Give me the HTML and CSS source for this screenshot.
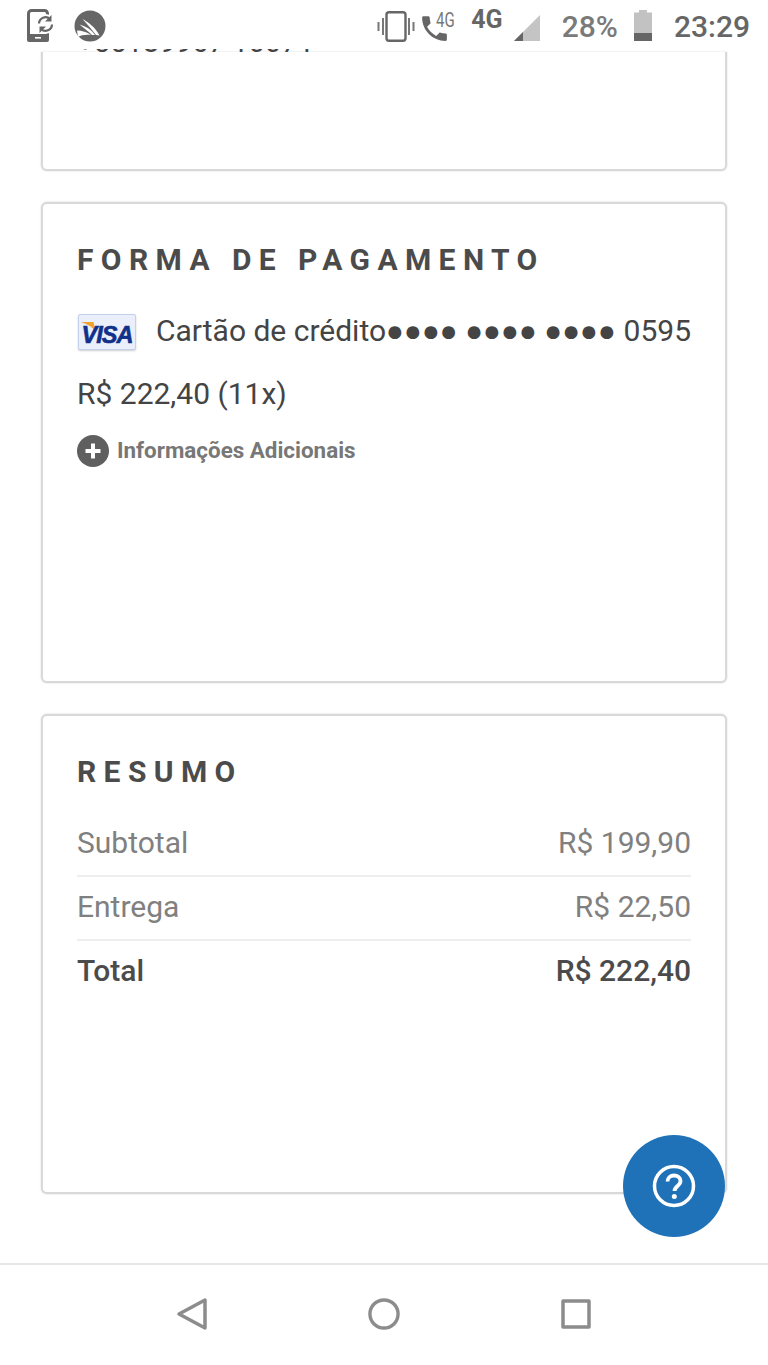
FILE: index.html
```html
<!DOCTYPE html>
<html lang="pt-BR">
<head>
<meta charset="utf-8">
<title>Resumo do pedido</title>
<link rel="stylesheet" href="styles.css">
</head>
<body>
<div class="screen">
  <header class="status">
    <div class="status-left">
      <svg class="ic-sync" viewBox="0 0 27 33"><rect x="1.500" y="1.500" width="19" height="30" rx="3" fill="none" stroke="#666" stroke-width="3"/><rect x="0" y="25" width="22" height="8" rx="2" fill="#666"/><rect x="8" y="28" width="6" height="1.600" fill="#fff"/><circle cx="18.500" cy="15" r="10" fill="#fff"/><path d="M12 14.500a6.500 6.500 0 0 1 11-4.500M25 15.500a6.500 6.500 0 0 1-11 4.500" fill="none" stroke="#666" stroke-width="2.200"/><path d="M24.500 6v6.500h-6.500zM12.500 24v-6.500h6.500z" fill="#666"/></svg>
      <svg class="ic-app" viewBox="0 0 32 32"><circle cx="16" cy="16" r="15.500" fill="#666"/><path d="M8.500 9C14 12 21 17 25.500 25.500L22 25C19 21 14 15 8.500 9ZM5.500 14.500C11 16 17 19 21 25L18 25C15 22 10 18 5.500 14.500ZM3 20.500C8 20.500 13 22 17 25C12 24.500 7 25 4 27Z" fill="#fff"/></svg>
    </div>
    <div class="status-right">
      <svg class="ic-vib" viewBox="0 0 38 31"><rect x="9.500" y="1.200" width="19" height="28.600" rx="2.500" fill="none" stroke="#666" stroke-width="2.400"/><path d="M1.500 11v9M6 7v17M32 7v17M36.500 11v9" stroke="#777" stroke-width="2" fill="none"/></svg>
      <div class="call">
        <svg class="ic-phone" viewBox="0 0 24 24"><path d="M6.600 10.800c1.400 2.800 3.800 5.100 6.600 6.600l2.200-2.200c.3-.3.700-.4 1-.2 1.100.4 2.300.6 3.600.6.600 0 1 .4 1 1V20c0 .6-.4 1-1 1C10.600 21 3 13.400 3 4c0-.6.400-1 1-1h3.500c.6 0 1 .4 1 1 0 1.300.2 2.500.6 3.600.1.300 0 .7-.2 1z" fill="#666"/></svg>
        <span class="call-4g">4G</span>
      </div>
      <span class="net">4G</span>
      <svg class="ic-signal" viewBox="0 0 26 26"><path d="M26 0V26H0Z" fill="#c4c4c4"/><path d="M9 17V26H0Z" fill="#666"/></svg>
      <span class="pct">28%</span>
      <svg class="ic-batt" viewBox="0 0 18 31"><path d="M5 0h8v2.500h5V31H0V2.500h5Z" fill="#c2c2c2"/><rect y="23" width="18" height="8" fill="#666"/></svg>
      <span class="time">23:29</span>
    </div>
  </header>

  <main class="content">
    <section class="card card-address">
      <p class="phone">+55189967 10071</p>
    </section>

    <section class="card card-pay">
      <h2 class="title">FORMA DE PAGAMENTO</h2>
      <div class="pay-row">
        <div class="visa"><svg class="visa-flag" viewBox="0 0 12 8"><path d="M0 0H10L12 8C9 4 5 1.500 0 0Z" fill="#f0a22e"/></svg><span class="visa-text">VISA</span></div>
        <span class="pay-name">Cartão de crédito</span><span class="dots">●●●● ●●●● ●●●●</span>
        <span class="pay-num">0595</span>
      </div>
      <p class="pay-amount">R$ 222,40 (11x)</p>
      <div class="more">
        <svg class="ic-plus" viewBox="0 0 32 32"><circle cx="16" cy="16" r="16" fill="#5f5f5f"/><path d="M16 8.500v15M8.500 16h15" stroke="#fff" stroke-width="4" fill="none"/></svg>
        <span>Informações Adicionais</span>
      </div>
    </section>

    <section class="card card-sum">
      <h2 class="title">RESUMO</h2>
      <div class="row"><span>Subtotal</span><span>R$ 199,90</span></div>
      <div class="row"><span>Entrega</span><span>R$ 22,50</span></div>
      <div class="row row-total"><span>Total</span><span>R$ 222,40</span></div>
    </section>
  </main>

  <button class="fab" type="button" aria-label="Ajuda">
    <svg viewBox="0 0 44 44"><circle cx="22" cy="22" r="19.500" fill="none" stroke="#fff" stroke-width="3.500"/><path d="M15.500 17.500c0-3.800 2.900-6 6.500-6s6.500 2.300 6.500 5.600c0 4.900-6 4.900-6 10" fill="none" stroke="#fff" stroke-width="3.800"/><circle cx="22.300" cy="32.500" r="2.500" fill="#fff"/></svg>
  </button>

  <nav class="nav">
    <svg class="nav-ic" viewBox="0 0 32 34"><path d="M29 3V31L3 17Z" fill="none" stroke="#8c8c8c" stroke-width="3.500" stroke-linejoin="round"/></svg>
    <svg class="nav-ic" viewBox="0.500 0.500 33 33"><circle cx="17" cy="17" r="14.500" fill="none" stroke="#8c8c8c" stroke-width="3.500"/></svg>
    <svg class="nav-ic" viewBox="0 0 32 32"><rect x="3" y="3" width="26" height="26" fill="none" stroke="#8c8c8c" stroke-width="3.500" stroke-linejoin="round"/></svg>
  </nav>
</div>
</body>
</html>
```

FILE: styles.css
```css
* { box-sizing: border-box; }
html, body { margin: 0; padding: 0; background: #fff; }
body { font-family: Roboto, "Liberation Sans", sans-serif; color: #444; }
.screen { position: relative; width: 768px; height: 1365px; overflow: hidden; display: flex; flex-direction: column; background: #fff; }

.status { height: 49px; flex: none; display: flex; justify-content: space-between; align-items: flex-start; padding: 8px 18px 0 27px; background: #fff; }
.status-left { display: flex; align-items: center; gap: 20px; }
.ic-sync { width: 27px; height: 33px; display: block; margin-top: 1px; }
.ic-app { width: 32px; height: 32px; display: block; margin-top: 2px; }
.status-right { display: flex; align-items: flex-start; color: #666; }
.ic-vib { width: 38px; height: 31px; margin-top: 3px; }
.call { position: relative; width: 34px; height: 36px; margin-left: 6px; }
.ic-phone { position: absolute; left: -3px; top: 4px; width: 33px; height: 33px; }
.call-4g { position: absolute; left: 15px; top: 2px; font-size: 20px; line-height: 20px; color: #777; transform: scaleX(.75); transform-origin: left; }
.net { font-weight: 700; font-size: 25px; line-height: 22px; margin: 1px 0 0 16px; color: #666; }
.ic-signal { width: 26px; height: 26px; margin-left: 11px; margin-top: 7px; }
.pct { font-size: 30px; line-height: 38px; font-weight: 500; margin-left: 22px; color: #7a7a7a; }
.ic-batt { width: 18px; height: 31px; margin-left: 16px; margin-top: 2px; }
.time { font-size: 30px; line-height: 38px; font-weight: 500; margin-left: 22px; color: #666; }

.content { flex: 1; display: flex; flex-direction: column; gap: 31px; padding: 0 41px; overflow: hidden; }
.card { flex: none; width: 686px; background: #fff; border: 2px solid #d9d9d9; border-radius: 6px; padding: 34px; box-shadow: 0 0 2px #d4d4d4; }
.card-address { height: 119px; margin-top: 3px; border-top: 0; border-radius: 0 0 6px 6px; padding-top: 0; }
.phone { margin: -22px 0 0; font-size: 29.200px; line-height: 24px; color: #444; height: 24px; white-space: nowrap; }
.card-pay { height: 481px; }
.card-sum { height: 480px; }
.title { margin: 0; font-size: 30px; line-height: 44px; font-weight: 700; letter-spacing: 7.400px; color: #4b4b4b; height: 44px; }

.pay-row { display: flex; align-items: center; margin-top: 32px; height: 36px; font-size: 30px; color: #444; white-space: nowrap; }
.visa { position: relative; width: 58px; height: 36px; margin-left: 1px; flex: none; background: #eaeffb; border: 1px solid #c5d0ec; border-radius: 2px; box-shadow: 0 1px 2px #ccc; text-align: center; }
.visa-flag { position: absolute; left: 2px; top: 7px; width: 15px; height: 10px; }
.visa-text { font-family: "Liberation Sans", sans-serif; font-style: italic; font-weight: 700; font-size: 23.500px; line-height: 34px; color: #10308a; letter-spacing: -1px; position: relative; -webkit-text-stroke: .6px #10308a; }
.pay-name { margin: 0 0 4px 20px; }
.dots { font-size: 29.700px; margin: 0 0 3px; }
.pay-num { margin: 0 0 4px auto; }
.pay-amount { margin: 25px 0 0; font-size: 30px; line-height: 38px; color: #444; }
.more { display: flex; align-items: center; gap: 9px; margin-top: 22px; height: 32px; font-size: 22.400px; font-weight: 700; color: #777; }
.more span { margin: 0 0 2px -1px; }
.ic-plus { width: 32px; height: 32px; flex: none; }

.row { display: flex; justify-content: space-between; align-items: center; height: 64px; padding-bottom: 3px; font-size: 30px; color: #808080; border-bottom: 2px solid #eee; }
.title + .row { margin-top: 19px; }
.row-total { border-bottom: 0; padding-bottom: 6px; color: #4b4b4b; font-weight: 500; }

.fab { position: absolute; left: 623px; top: 1135px; width: 102px; height: 102px; padding: 0; border: 0; border-radius: 50%; background: #1f72b8; display: flex; align-items: center; justify-content: center; }
.fab svg { width: 44px; height: 44px; }

.nav { height: 102px; flex: none; display: flex; justify-content: center; align-items: center; gap: 160px; border-top: 2px solid #e6e6e6; padding-bottom: 2px; background: #fff; }
.nav-ic { width: 32px; height: 34px; }
```
